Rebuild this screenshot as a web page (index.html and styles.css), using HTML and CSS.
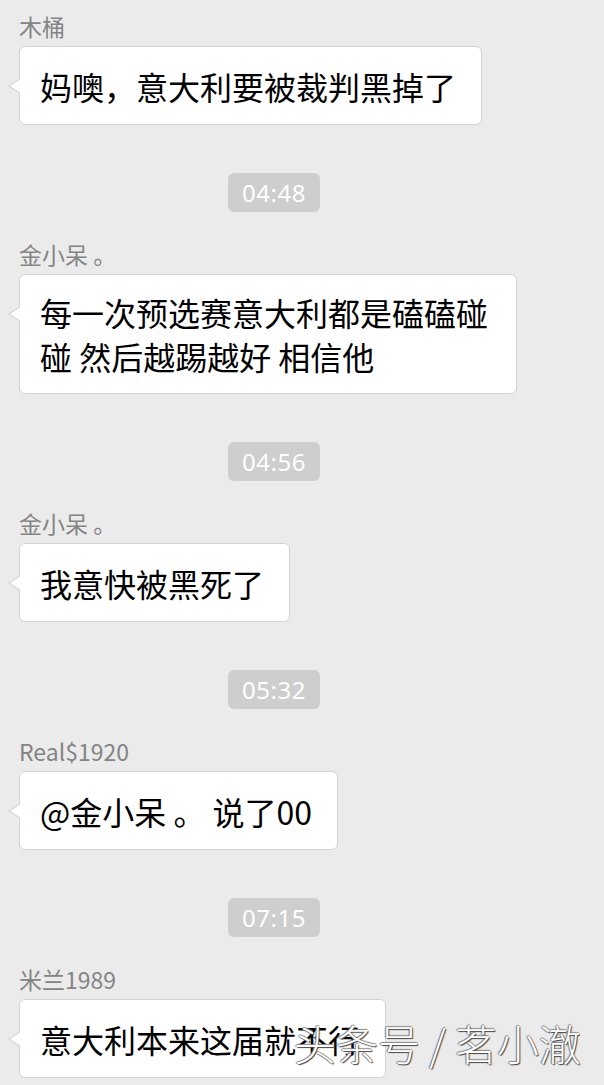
FILE: index.html
```html
<!DOCTYPE html>
<html lang="zh-CN">
<head>
<meta charset="utf-8">
<title>聊天记录</title>
<link rel="stylesheet" href="styles.css">
</head>
<body>
<div class="chat">
  <div class="msg first">
    <div class="name">木桶</div>
    <div class="bubble"><span>妈噢，意大利要被裁判黑掉了</span></div>
  </div>
  <div class="ts-row"><span class="ts">04:48</span></div>
  <div class="msg">
    <div class="name">金小呆 。</div>
    <div class="bubble"><span>每一次预选赛意大利都是磕磕碰碰 然后越踢越好 相信他</span></div>
  </div>
  <div class="ts-row"><span class="ts">04:56</span></div>
  <div class="msg">
    <div class="name">金小呆 。</div>
    <div class="bubble"><span>我意快被黑死了</span></div>
  </div>
  <div class="ts-row"><span class="ts">05:32</span></div>
  <div class="msg">
    <div class="name">Real$1920</div>
    <div class="bubble"><span>@金小呆 。 说了00</span></div>
  </div>
  <div class="ts-row"><span class="ts">07:15</span></div>
  <div class="msg">
    <div class="name">米兰1989</div>
    <div class="bubble"><span>意大利本来这届就不行</span></div>
  </div>
</div>
<div class="watermark">头条号 / 茗小澈</div>
</body>
</html>
```

FILE: styles.css
```css
html, body {
  margin: 0;
  padding: 0;
}
body {
  width: 604px;
  height: 1085px;
  overflow: hidden;
  background: #ebebeb;
  position: relative;
  font-family: "Noto Sans CJK SC", sans-serif;
}
.chat {
  padding: 11px 0 0 19px;
  display: flex;
  flex-direction: column;
}
.msg {
  display: flex;
  flex-direction: column;
  align-items: flex-start;
  margin-top: 27px;
}
.msg.first {
  margin-top: 0;
}
.name {
  font-family: "Noto Sans CJK SC", sans-serif;
  font-size: 23px;
  line-height: 30px;
  height: 30px;
  color: #848484;
  margin-bottom: 5px;
}
.bubble {
  position: relative;
  box-sizing: border-box;
  min-height: 79px;
  max-width: 498px;
  display: flex;
  align-items: center;
  padding: 15px 25px 15px 20px;
  background: #fff;
  border: 1px solid #d4d4d4;
  border-radius: 6px;
  font-family: "Noto Sans CJK SC", sans-serif;
  font-size: 32px;
  line-height: 44px;
  color: #000;
}
.bubble::before,
.bubble::after {
  content: "";
  position: absolute;
  top: 32px;
  width: 0;
  height: 0;
  border-top: 7px solid transparent;
  border-bottom: 7px solid transparent;
}
.bubble::before {
  left: -12px;
  border-right: 11px solid #d4d4d4;
}
.bubble::after {
  left: -10px;
  border-right: 11px solid #fff;
}
.ts-row {
  width: 548px;
  margin-left: -19px;
  margin-top: 48px;
  display: flex;
  justify-content: center;
}
.ts {
  height: 39px;
  line-height: 39px;
  padding: 0 14px;
  background: #cecece;
  border-radius: 6px;
  color: #fff;
  font-family: "Noto Sans", sans-serif;
  font-size: 24px;
  letter-spacing: 0.5px;
}
.watermark {
  position: absolute;
  left: 294px;
  top: 1020px;
  font-family: "Noto Sans CJK SC", sans-serif;
  font-weight: 300;
  font-size: 42px;
  line-height: 46px;
  color: #fff;
  white-space: nowrap;
  text-shadow: 1px 1px 1px #444, -1px 0 1px #777, 0 -1px 1px #888;
}
```
